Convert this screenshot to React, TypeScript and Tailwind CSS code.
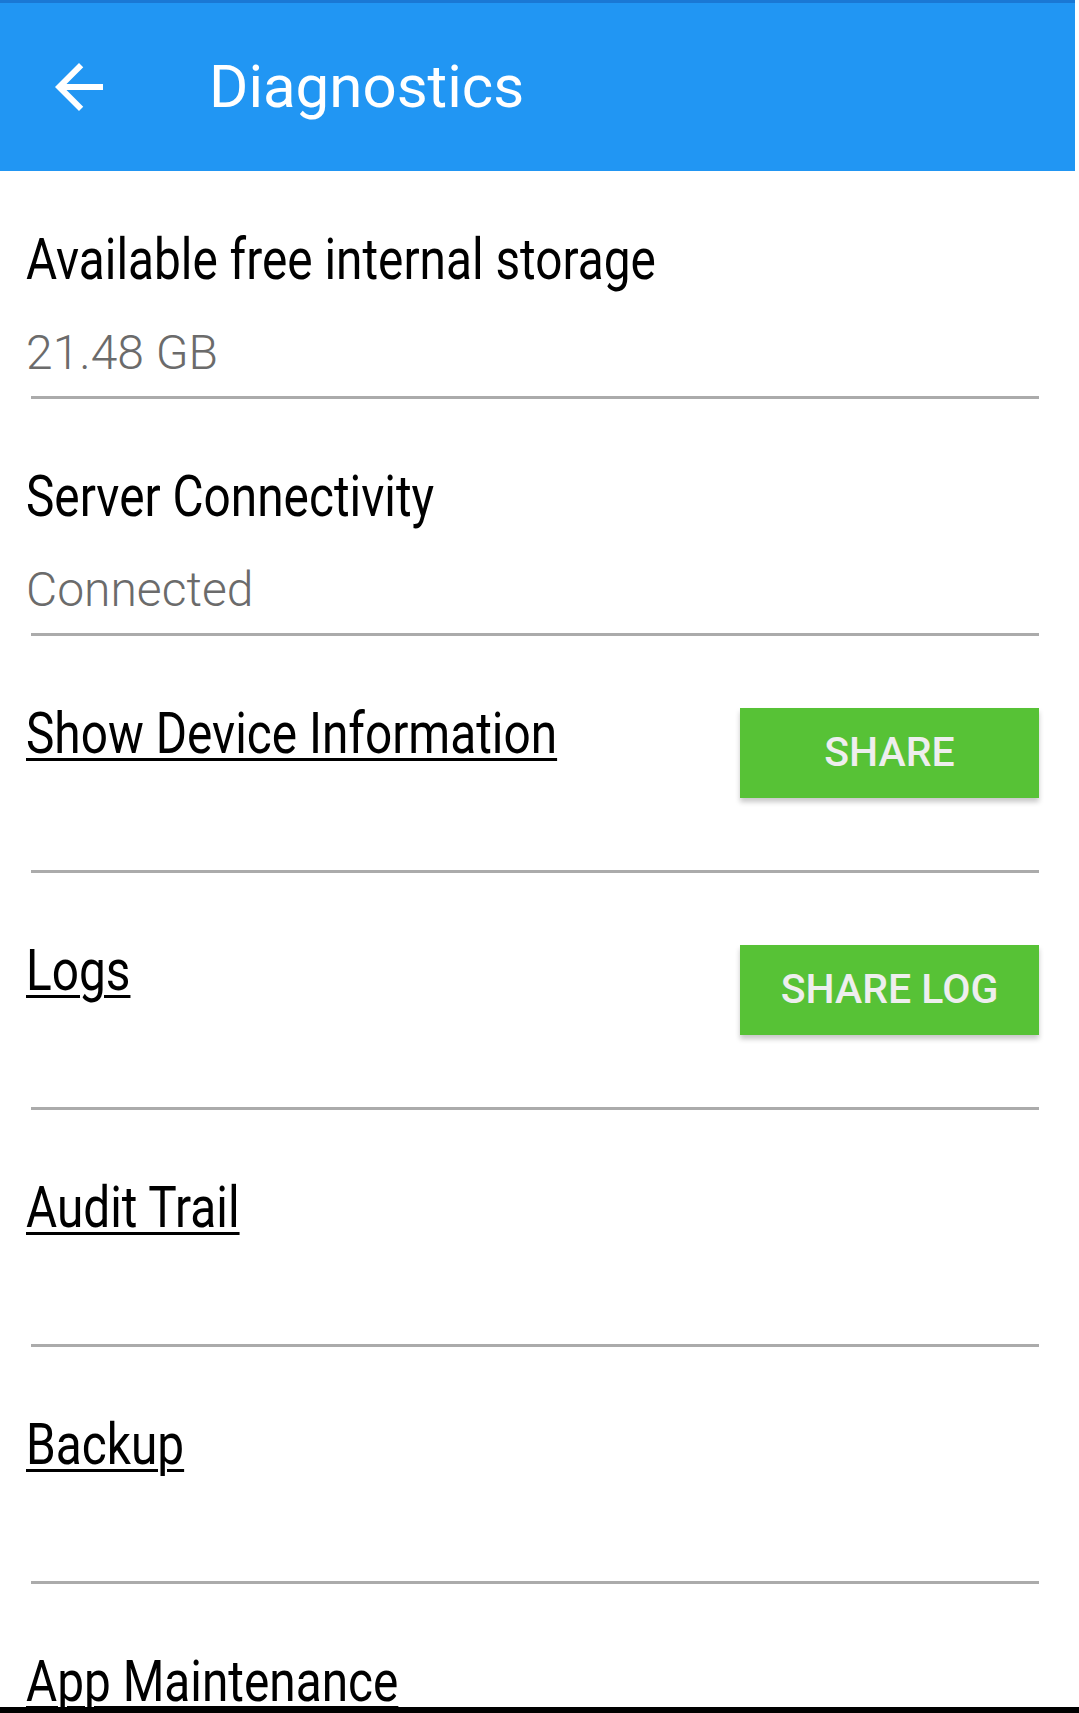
const ROWS = [
  { title: "Show Device Information", action: "Share" },
  { title: "Logs", action: "Share Log" },
  { title: "Audit Trail" },
  { title: "Backup" },
  { title: "App Maintenance" },
] as const;

function BackArrow() {
  return (
    <svg viewBox="0 0 24 24" className="ml-[43px] h-[72px] w-[72px] fill-white" aria-hidden="true">
      <path d="M20 11H7.83l5.59-5.59L12 4l-8 8 8 8 1.41-1.41L7.83 13H20v-2z" />
    </svg>
  );
}

function Divider() {
  return <div className="ml-[31px] mr-[40px] h-[3px] bg-[#ababab]" />;
}

function InfoRow({ title, value, first }: { title: string; value: string; first?: boolean }) {
  return (
    <section>
      <div className={first ? "pl-[26px] pr-[40px] pt-[55px] pb-[15px]" : "pl-[26px] pr-[40px] pt-[64px] pb-[15px]"}>
        <p className="origin-left scale-x-[0.838] whitespace-nowrap text-[57px] leading-[68px] text-black">{title}</p>
        <p className="mt-[31px] text-[48px] font-light leading-[56px] text-[#6b6b6b]">{value}</p>
      </div>
      <Divider />
    </section>
  );
}

function LinkRow({ title, action }: { title: string; action?: string }) {
  return (
    <section>
      <div className="flex h-[234px] items-start justify-between pl-[26px] pr-[40px] pt-[64px]">
        <p className="origin-left scale-x-[0.838] whitespace-nowrap text-[57px] leading-[68px] text-black underline decoration-[3px] underline-offset-[5px]">
          {title}
        </p>
        {action && (
          <button className="mt-[8px] flex h-[90px] w-[299px] items-center justify-center bg-[#57c236] text-[41px] font-medium uppercase text-[#eeeeee] shadow-[0_4px_5px_rgba(0,0,0,0.22)]">
            {action}
          </button>
        )}
      </div>
      <Divider />
    </section>
  );
}

export default function App() {
  return (
    <div className="flex h-[1713px] w-[1079px] flex-col overflow-hidden bg-white font-['Roboto',sans-serif]">
      <div className="h-[3px] w-[1075px] bg-[#1a78d4]" />
      <header className="flex h-[168px] w-[1075px] shrink-0 items-center bg-[#2196f3]">
        <BackArrow />
        <h1 className="ml-[94px] text-[60px] font-normal leading-none text-white">Diagnostics</h1>
      </header>

      <main className="flex-1 overflow-hidden">
        <InfoRow first title="Available free internal storage" value="21.48 GB" />
        <InfoRow title="Server Connectivity" value="Connected" />
        {ROWS.map((row) => (
          <LinkRow key={row.title} title={row.title} action={"action" in row ? row.action : undefined} />
        ))}
      </main>

      <div className="h-[6px] shrink-0 bg-black" />
    </div>
  );
}
